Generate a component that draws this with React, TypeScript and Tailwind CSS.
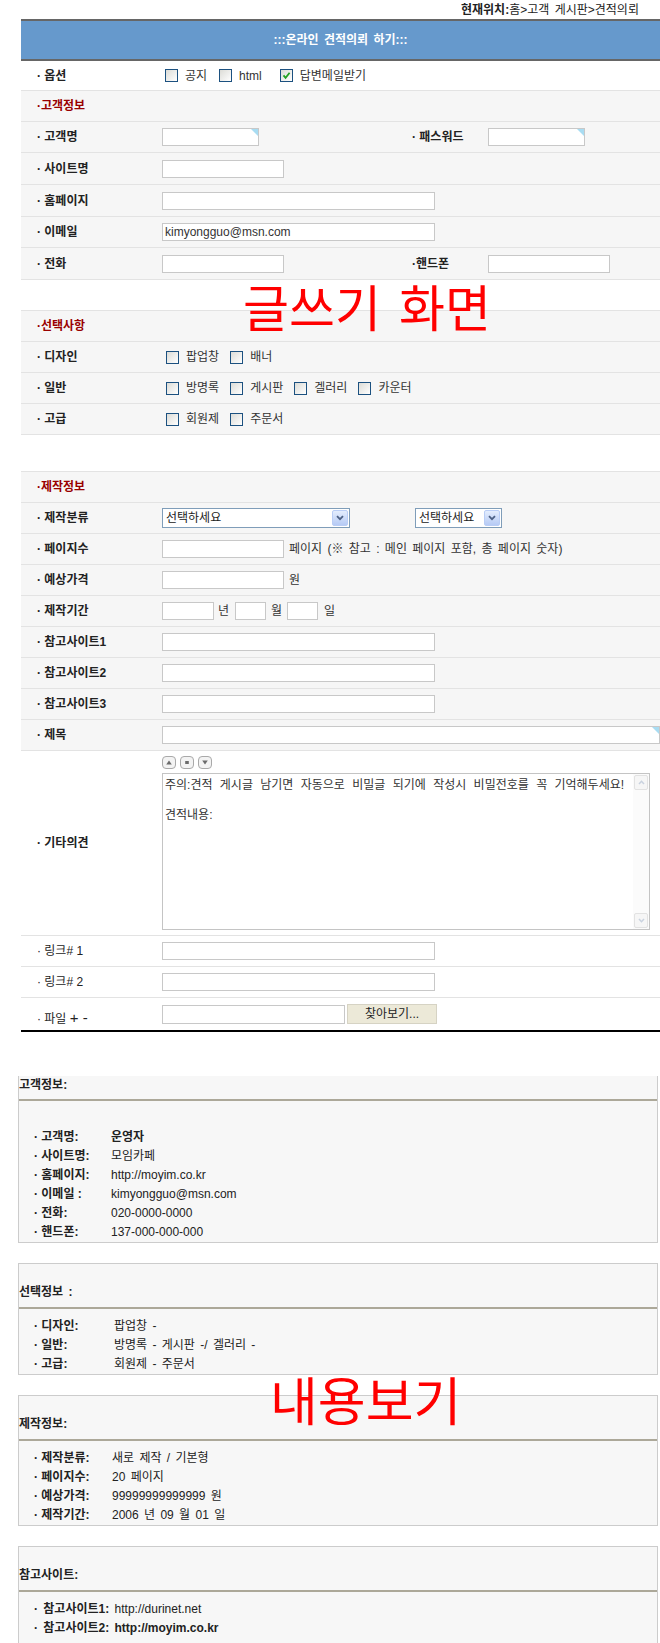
import React from "react";
import clsx from "clsx";

const FONT = "font-['Liberation_Sans','Noto_Sans_CJK_KR',sans-serif] [word-spacing:2px]";

function Field({ className, value, corner }: { className: string; value?: string; corner?: boolean }) {
  return (
    <div
      className={clsx(
        "relative h-[18px] shrink-0 overflow-hidden whitespace-nowrap border border-[#c8c8c8] bg-white pl-[2px] text-[12px] leading-[16px] text-[#333]",
        className
      )}
    >
      {value}
      {corner && (
        <svg className="absolute right-0 top-0" width="7" height="7" viewBox="0 0 7 7">
          <polygon points="0,0 7,0 7,7" fill="#a8dcf2" />
        </svg>
      )}
    </div>
  );
}

function Check({ on }: { on?: boolean }) {
  return (
    <span className="flex h-[13px] w-[13px] shrink-0 items-center justify-center border border-[#1c5180] bg-linear-to-br from-[#dcdcd7] to-white">
      {on && (
        <svg width="9" height="9" viewBox="0 0 9 9">
          <path d="M1.5 4.3 L3.6 6.8 L7.6 1.8" fill="none" stroke="#21a121" strokeWidth="1.8" />
        </svg>
      )}
    </span>
  );
}

function Opt({ label, on }: { label: string; on?: boolean }) {
  return (
    <span className="flex items-center gap-[7px]">
      <Check on={on} />
      <span>{label}</span>
    </span>
  );
}

function Select({ className, text }: { className: string; text: string }) {
  return (
    <div className={clsx("flex h-[20px] shrink-0 items-center border border-[#7f9db9] bg-white pl-[3px] text-[12px] text-[#222]", className)}>
      <span className="flex-1 whitespace-nowrap">{text}</span>
      <span className="mr-px flex h-[16px] w-[16px] items-center justify-center rounded-[2px] border border-[#b9cdf6] bg-linear-to-b from-[#e4edfd] to-[#b6caf5]">
        <svg width="8" height="6" viewBox="0 0 8 6">
          <path d="M1 1.2 L4 4.2 L7 1.2" fill="none" stroke="#4d6185" strokeWidth="1.8" />
        </svg>
      </span>
    </div>
  );
}

function Row({
  label,
  plain,
  white,
  h = "h-[31px]",
  children,
}: {
  label: string;
  plain?: boolean;
  white?: boolean;
  h?: string;
  children?: React.ReactNode;
}) {
  return (
    <div className={clsx("flex items-center border-b border-[#e3e3e3]", h, white ? "bg-white" : "bg-[#f6f6f6]")}>
      <div className={clsx("w-[141px] shrink-0 pl-[16px] text-[12px] text-[#222] [word-spacing:0px]", !plain && "font-bold")}>
        {"· " + label}
      </div>
      <div className="flex min-w-0 flex-1 items-center text-[12px] text-[#333]">{children}</div>
    </div>
  );
}

function SectionHead({ title }: { title: string }) {
  return (
    <div className="flex h-[31px] items-center border-b border-[#e3e3e3] bg-[#f6f6f6] pl-[16px] text-[12px] font-bold text-[#990000]">
      {"·" + title}
    </div>
  );
}

function Mini({ kind }: { kind: "up" | "mid" | "down" }) {
  return (
    <span className="flex h-[13px] w-[14px] items-center justify-center rounded-[4px] border border-[#a9a9a9] bg-[#f3f3f3]">
      <svg width="6" height="5" viewBox="0 0 6 5">
        {kind === "up" && <polygon points="3,0.5 5.8,4.5 0.2,4.5" fill="#6b6b6b" />}
        {kind === "mid" && <rect x="1.2" y="1" width="3.6" height="3" fill="#6b6b6b" />}
        {kind === "down" && <polygon points="0.2,0.5 5.8,0.5 3,4.5" fill="#6b6b6b" />}
      </svg>
    </span>
  );
}

type Item = { k: string; v: string; bold?: boolean };

function InfoBox({
  title,
  items,
  first,
  labelW,
}: {
  title: string;
  items: Item[];
  first?: boolean;
  labelW: string;
}) {
  return (
    <div
      className={clsx(
        "ml-[18px] w-[640px] border-[#cccccc] bg-[#f7f7f7] text-[12px] text-[#222]",
        first ? "mt-[44px] border-x border-b" : "mt-[20px] border"
      )}
    >
      {first ? (
        <div className="h-[25px] border-b-2 border-[#aca899] pt-[2px] font-bold leading-[14px]">{title}</div>
      ) : (
        <div className="flex h-[45px] items-end border-b-2 border-[#aca899] pb-[8px] font-bold leading-[14px]">{title}</div>
      )}
      <div className={clsx("pl-[15px] leading-[19px]", first ? "pt-[27px]" : "pt-[8px]")}>
        {items.map((it) => (
          <div key={it.k} className="flex whitespace-nowrap">
            <span className={clsx("shrink-0 font-bold [word-spacing:0px]", labelW)}>{"· " + it.k}</span>
            <span className={clsx(it.bold && "font-bold")}>{it.v}</span>
          </div>
        ))}
      </div>
    </div>
  );
}

export default function App() {
  return (
    <div className={clsx("relative w-[660px] overflow-hidden bg-white pb-[10px]", FONT)}>
      {/* breadcrumb */}
      <div className="flex h-[19px] items-center whitespace-nowrap pl-[461px] text-[12px] text-[#222]">
        <b>현재위치:</b>
        <span>홈&gt;고객 게시판&gt;견적의뢰</span>
      </div>

      <div className="ml-[21px] w-[639px]">
        <div className="flex h-[42px] items-center justify-center border-y-2 border-[#666666] bg-[#6699cc] text-[12px] font-bold text-white">
          :::온라인 견적의뢰 하기:::
        </div>

        <Row label="옵션" white h="h-[30px]">
          <div className="flex items-center pl-[3px]">
            <Opt label="공지" />
            <span className="ml-[12px]">
              <Opt label="html" />
            </span>
            <span className="ml-[18px]">
              <Opt label="답변메일받기" on />
            </span>
          </div>
        </Row>
        <SectionHead title="고객정보" />
        <Row label="고객명">
          <div className="w-[250px] shrink-0">
            <Field className="w-[97px]" corner />
          </div>
          <div className="w-[76px] shrink-0 font-bold text-[#222] [word-spacing:0px]">· 패스워드</div>
          <Field className="w-[97px]" corner />
        </Row>
        <Row label="사이트명" h="h-[32px]">
          <Field className="w-[122px]" />
        </Row>
        <Row label="홈페이지" h="h-[32px]">
          <Field className="w-[273px]" />
        </Row>
        <Row label="이메일">
          <Field className="w-[273px]" value="kimyongguo@msn.com" />
        </Row>
        <Row label="전화" h="h-[32px]">
          <div className="w-[250px] shrink-0">
            <Field className="w-[122px]" />
          </div>
          <div className="w-[76px] shrink-0 font-bold text-[#222]">·핸드폰</div>
          <Field className="w-[122px]" />
        </Row>

        {/* 선택사항 */}
        <div className="mt-[30px] border-t border-[#e3e3e3]">
          <SectionHead title="선택사항" />
          <Row label="디자인">
            <div className="flex items-center gap-[11px] pl-[4px]">
              <Opt label="팝업창" />
              <Opt label="배너" />
            </div>
          </Row>
          <Row label="일반">
            <div className="flex items-center gap-[11px] pl-[4px]">
              <Opt label="방명록" />
              <Opt label="게시판" />
              <Opt label="겔러리" />
              <Opt label="카운터" />
            </div>
          </Row>
          <Row label="고급">
            <div className="flex items-center gap-[11px] pl-[4px]">
              <Opt label="회원제" />
              <Opt label="주문서" />
            </div>
          </Row>
        </div>

        {/* 제작정보 */}
        <div className="mt-[36px] border-t border-[#e3e3e3]">
          <SectionHead title="제작정보" />
          <Row label="제작분류">
            <Select className="w-[188px]" text="선택하세요" />
            <div className="w-[65px] shrink-0" />
            <Select className="w-[87px]" text="선택하세요" />
          </Row>
          <Row label="페이지수">
            <Field className="w-[122px]" />
            <span className="ml-[5px] whitespace-nowrap">페이지 (※ 참고 : 메인 페이지 포함, 총 페이지 숫자)</span>
          </Row>
          <Row label="예상가격">
            <Field className="w-[122px]" />
            <span className="ml-[5px]">원</span>
          </Row>
          <Row label="제작기간">
            <Field className="w-[52px]" />
            <span className="ml-[4px] mr-[6px]">년</span>
            <Field className="w-[31px]" />
            <span className="ml-[5px] mr-[5px]">월</span>
            <Field className="w-[31px]" />
            <span className="ml-[6px]">일</span>
          </Row>
          <Row label="참고사이트1">
            <Field className="w-[273px]" />
          </Row>
          <Row label="참고사이트2">
            <Field className="w-[273px]" />
          </Row>
          <Row label="참고사이트3">
            <Field className="w-[273px]" />
          </Row>
          <Row label="제목">
            <Field className="w-[498px]" corner />
          </Row>

          {/* 기타의견 */}
          <div className="flex h-[185px] items-center border-b border-[#e3e3e3] bg-white">
            <div className="w-[141px] shrink-0 pl-[16px] text-[12px] font-bold text-[#222] [word-spacing:0px]">· 기타의견</div>
            <div className="flex h-full flex-col pt-[5px]">
              <div className="flex gap-[4px]">
                <Mini kind="up" />
                <Mini kind="mid" />
                <Mini kind="down" />
              </div>
              <div className="mt-[4px] flex h-[157px] w-[488px] border border-[#c4c4c4] bg-white">
                <div className="min-w-0 flex-1 whitespace-nowrap pl-[2px] pt-[4px] text-[12px] leading-[15px] text-[#333] [word-spacing:4px]">
                  <div>주의:견적 게시글 남기면 자동으로 비밀글 되기에 작성시 비밀전호를 꼭 기억해두세요!</div>
                  <div>&nbsp;</div>
                  <div>견적내용:</div>
                </div>
                <div className="flex w-[16px] shrink-0 flex-col justify-between bg-[#fbfbfb] p-px">
                  <span className="flex h-[15px] items-center justify-center rounded-[2px] border border-[#e2e2e2] bg-[#f6f6f6]">
                    <svg width="7" height="5" viewBox="0 0 7 5">
                      <path d="M1 4 L3.5 1.3 L6 4" fill="none" stroke="#c9d2df" strokeWidth="1.5" />
                    </svg>
                  </span>
                  <span className="flex h-[15px] items-center justify-center rounded-[2px] border border-[#e2e2e2] bg-[#f6f6f6]">
                    <svg width="7" height="5" viewBox="0 0 7 5">
                      <path d="M1 1 L3.5 3.7 L6 1" fill="none" stroke="#c9d2df" strokeWidth="1.5" />
                    </svg>
                  </span>
                </div>
              </div>
            </div>
          </div>

          <Row label="링크# 1" plain white>
            <Field className="w-[273px]" />
          </Row>
          <Row label="링크# 2" plain white>
            <Field className="w-[273px]" />
          </Row>
          <div className="flex h-[34px] items-center border-b-2 border-black bg-white">
            <div className="w-[141px] shrink-0 pl-[16px] pt-[10px] text-[12px] text-[#222] [word-spacing:0px]">
              · 파일 <span className="text-[15px] leading-none">+ -</span>
            </div>
            <Field className="h-[19px] w-[183px]" />
            <div className="ml-[2px] flex h-[20px] w-[90px] items-center justify-center border border-[#d6d3c4] bg-[#ece9d8] text-[12px] text-[#222]">
              찾아보기...
            </div>
          </div>
        </div>
      </div>

      {/* 내용보기 */}
      <InfoBox
        first
        title="고객정보:"
        labelW="w-[77px]"
        items={[
          { k: "고객명:", v: "운영자", bold: true },
          { k: "사이트명:", v: "모임카페" },
          { k: "홈페이지:", v: "http://moyim.co.kr" },
          { k: "이메일 :", v: "kimyongguo@msn.com" },
          { k: "전화:", v: "020-0000-0000" },
          { k: "핸드폰:", v: "137-000-000-000" },
        ]}
      />
      <InfoBox
        title="선택정보 :"
        labelW="w-[80px]"
        items={[
          { k: "디자인:", v: "팝업창 -" },
          { k: "일반:", v: "방명록 - 게시판 -/ 겔러리 -" },
          { k: "고급:", v: "회원제 - 주문서" },
        ]}
      />
      <InfoBox
        title="제작정보:"
        labelW="w-[78px]"
        items={[
          { k: "제작분류:", v: "새로 제작 / 기본형" },
          { k: "페이지수:", v: "20 페이지" },
          { k: "예상가격:", v: "99999999999999 원" },
          { k: "제작기간:", v: "2006 년 09 월 01 일" },
        ]}
      />
      <div className="ml-[18px] mt-[20px] w-[640px] border border-[#cccccc] bg-[#f7f7f7] text-[12px] text-[#222]">
        <div className="flex h-[45px] items-end border-b-2 border-[#aca899] pb-[8px] font-bold leading-[14px]">참고사이트:</div>
        <div className="pb-[12px] pl-[15px] pt-[8px] leading-[19px]">
          <div className="whitespace-nowrap">
            <b>· 참고사이트1:</b> http://durinet.net
          </div>
          <div className="whitespace-nowrap font-bold">· 참고사이트2: http://moyim.co.kr</div>
        </div>
      </div>

      {/* overlay captions */}
      <div className="absolute left-[243px] top-[285px] text-[50px] leading-none text-[#ff0000] [word-spacing:4px]">글쓰기 화면</div>
      <div className="absolute left-[270px] top-[1377px] text-[52px] leading-none text-[#ff0000]">내용보기</div>
    </div>
  );
}
